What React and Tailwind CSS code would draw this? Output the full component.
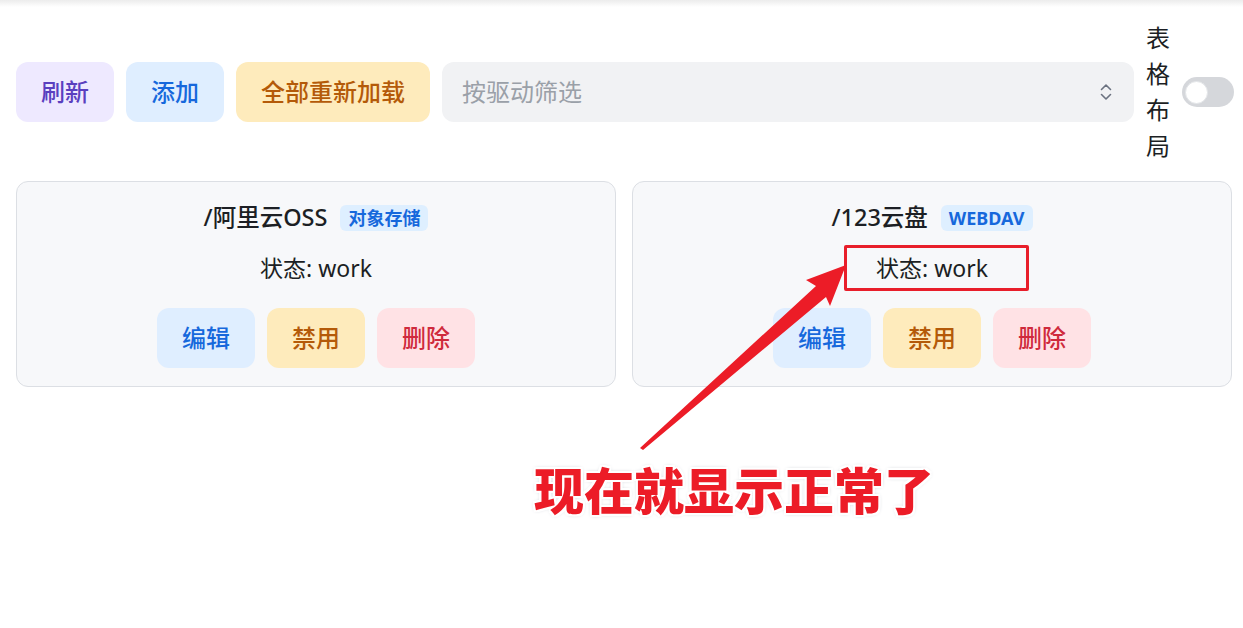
import React from 'react';

const font = { fontFamily: '"Noto Sans", "Noto Sans CJK SC", sans-serif' };

const drivers = [
  { path: '/阿里云OSS', type: '对象存储', status: 'work' },
  { path: '/123云盘', type: 'WEBDAV', status: 'work', marked: true },
];

const ToolButton = ({ className, children }) => (
  <button
    className={`h-[60px] shrink-0 rounded-[12px] px-[25px] text-[24px] font-medium leading-none ${className}`}
  >
    {children}
  </button>
);

const DriverCard = ({ driver }) => (
  <div className="flex flex-col items-center rounded-[12px] border border-[#dcdfe4] bg-[#f7f8fa] pb-[18px] pt-[21px]">
    {/* title + type badge */}
    <div className="flex h-[30px] items-center gap-[13px]">
      <span className="text-[23.5px] font-medium text-[#1c1f24]">{driver.path}</span>
      <span className="flex h-[26px] items-center rounded-[6px] bg-[#deefff] px-[8px] text-[18px] font-bold text-[#1668dc]">
        {driver.type}
      </span>
    </div>

    <div className="mt-[20px] flex h-[30px] items-center text-[23px] text-[#1c1f24]">
      状态: {driver.status}
    </div>

    <div className="mt-[25px] flex gap-3">
      <ToolButton className="bg-[#dfeeff] text-[#1668dc]">编辑</ToolButton>
      <ToolButton className="bg-[#feebbc] text-[#b45a09]">禁用</ToolButton>
      <ToolButton className="bg-[#ffe2e5] text-[#cf2a3c]">删除</ToolButton>
    </div>
  </div>
);

export default function App() {
  return (
    <div className="relative h-[628px] w-full overflow-hidden bg-white" style={font}>
      {/* header shadow */}
      <div className="absolute left-0 right-0 top-0 h-[7px] bg-gradient-to-b from-[#ececec] to-white" />

      <div className="pl-4 pr-[11px] pt-[20px]">
        {/* toolbar */}
        <div className="-mr-[2px] flex items-center gap-3">
          <ToolButton className="bg-[#eee9ff] text-[#5a3fbf]">刷新</ToolButton>
          <ToolButton className="bg-[#dfeeff] text-[#1668dc]">添加</ToolButton>
          <ToolButton className="bg-[#feebbc] text-[#b45a09]">全部重新加载</ToolButton>

          <div className="flex h-[60px] flex-1 items-center justify-between rounded-[12px] bg-[#f1f2f4] pl-[20px] pr-[22px]">
            <span className="text-[24px] text-[#9aa0a8]">按驱动筛选</span>
            <svg width="12" height="18" viewBox="0 0 12 18" fill="none" stroke="#6b7280" strokeWidth="1.6" strokeLinecap="round" strokeLinejoin="round">
              <polyline points="1.5,6.5 6,2 10.5,6.5" />
              <polyline points="1.5,11.5 6,16 10.5,11.5" />
            </svg>
          </div>

          <div className="w-[24px] text-[24px] leading-[36px] text-[#1c1f24]">表格布局</div>

          <div className="flex h-[30px] w-[52px] shrink-0 items-center rounded-full bg-[#d5d7db] px-[3px]">
            <div className="h-[23px] w-[23px] rounded-full border border-[#e3e5e8] bg-white" />
          </div>
        </div>

        {/* driver cards */}
        <div className="mt-[17px] grid grid-cols-2 gap-4">
          {drivers.map((d) => (
            <DriverCard key={d.path} driver={d} />
          ))}
        </div>
      </div>

      {/* annotation: box, arrow, caption */}
      <div className="absolute left-[844px] top-[245px] h-[46px] w-[185px] rounded-[2px] border-[3px] border-[#e81e2a]" />
      <svg className="absolute left-0 top-0" width="1243" height="628" viewBox="0 0 1243 628">
        <polygon
          fill="#ec1c27"
          points="640,448 643,450 826,297 830,306 846,265 806,280 816,286"
        />
      </svg>
      <div
        className="absolute left-[534px] top-[459px] text-[50px] font-black leading-[64px] text-[#ec1c27]"
        style={{
          textShadow:
            '2px 0 #fff, -2px 0 #fff, 0 2px #fff, 0 -2px #fff, 2px 2px #fff, -2px -2px #fff, 2px -2px #fff, -2px 2px #fff, 0 0 4px #9ca3af',
        }}
      >
        现在就显示正常了
      </div>
    </div>
  );
}
